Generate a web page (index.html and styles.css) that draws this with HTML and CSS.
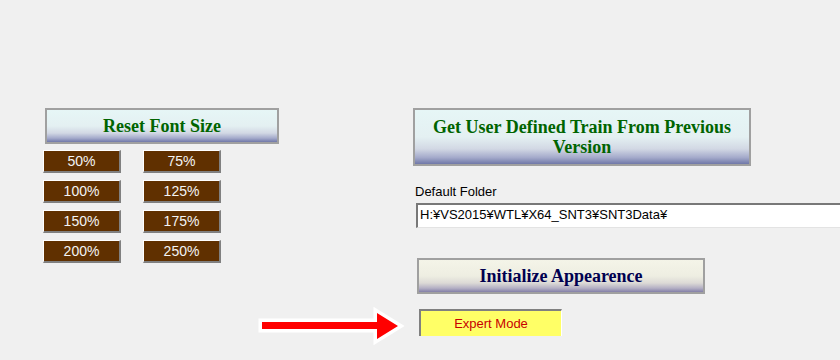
FILE: index.html
```html
<!DOCTYPE html>
<html lang="ja">
<head>
    <meta charset="UTF-8">
    <meta name="viewport" content="width=device-width, initial-scale=1.0">
    <title>Settings</title>
    <link rel="stylesheet" href="styles.css">
</head>
<body>

    <div class="page">
        <div class="left-col">
            <button class="title-btn reset-btn">Reset Font Size</button>

            <div class="size-grid">
                <button class="size-btn">50%</button>
                <button class="size-btn">75%</button>
                <button class="size-btn">100%</button>
                <button class="size-btn">125%</button>
                <button class="size-btn">150%</button>
                <button class="size-btn">175%</button>
                <button class="size-btn">200%</button>
                <button class="size-btn">250%</button>
            </div>
        </div>

        <div class="right-col">
            <button class="title-btn train-btn">Get User Defined Train From Previous Version</button>

            <label class="folder-label" for="folder">Default Folder</label>
            <input type="text" id="folder" class="folder-input" value="H:¥VS2015¥WTL¥X64_SNT3¥SNT3Data¥" readonly>

            <button class="title-btn init-btn">Initialize Appearence</button>

            <button class="expert-btn">Expert Mode</button>
        </div>
    </div>

    <!-- arrow pointing to the expert mode button -->
    <svg class="arrow" width="152" height="50" viewBox="0 0 152 50">
        <polygon points="5,19 120,19 120,10 141,23 120,36 120,26 5,26"
                 fill="#ff0000" stroke="#ffffff" stroke-width="7"
                 stroke-linejoin="miter" paint-order="stroke"/>
    </svg>

</body>
</html>
```

FILE: styles.css
```css
body {
    margin: 0;
    background-color: #f0f0f0;
    font-family: "Liberation Sans", Arial, sans-serif;
    font-size: 13px;
    overflow: hidden;
    height: 360px;
    position: relative;
}
.page {
    display: flex;
    padding: 108px 0 0 43px;
}
.left-col {
    width: 370px;
    flex-shrink: 0;
}
.right-col {
    display: flex;
    flex-direction: column;
    align-items: flex-start;
}
button {
    font-family: inherit;
    padding: 0;
    cursor: pointer;
}
.title-btn {
    box-sizing: border-box;
    border: 2px solid #a0a0a0;
    font-family: "Liberation Serif", "Times New Roman", serif;
    font-size: 18px;
    font-weight: bold;
    line-height: 20px;
    color: #006400;
    background: linear-gradient(#e6f6f6 0%, #e4f0f2 50%, #d2d8e4 72%, #a4aacb 88%, #7078a8 100%);
}
.reset-btn {
    margin-left: 2px;
    width: 234px;
    height: 36px;
}
.train-btn {
    width: 338px;
    height: 58px;
    padding: 0 12px;
}
.init-btn {
    margin: 30px 0 0 4px;
    width: 288px;
    height: 36px;
    color: #000050;
    background: linear-gradient(#f4f4e8 0%, #eeeee2 50%, #dcdad6 72%, #b4b0c4 88%, #8480a8 100%);
}
.size-grid {
    display: grid;
    grid-template-columns: 78px 78px;
    column-gap: 22px;
    row-gap: 7px;
    margin-top: 6px;
}
.size-btn {
    box-sizing: border-box;
    height: 23px;
    background-color: #603000;
    color: #f4f4f4;
    font-size: 14px;
    border-style: solid;
    border-width: 1px 2px 2px 1px;
    border-color: #ffffff #808080 #808080 #ffffff;
}
.folder-label {
    margin: 18px 0 0 2px;
    line-height: 15px;
    color: #000000;
}
.folder-input {
    box-sizing: border-box;
    margin: 4px 0 0 3px;
    width: 460px;
    height: 25px;
    padding: 0 0 4px 2px;
    font-family: inherit;
    font-size: 13px;
    color: #000000;
    background: #ffffff;
    border-style: solid;
    border-width: 2px 0 1px 2px;
    border-color: #787878 #e3e3e3 #e3e3e3 #787878;
    outline: none;
}
.expert-btn {
    box-sizing: border-box;
    margin: 15px 0 0 6px;
    width: 143px;
    height: 27px;
    background-color: #ffff66;
    color: #c80000;
    font-size: 13px;
    border-style: solid;
    border-width: 2px 1px 0 2px;
    border-color: #808080 #ffffff #808080 #808080;
}
.arrow {
    position: absolute;
    left: 257px;
    top: 303px;
}
```
